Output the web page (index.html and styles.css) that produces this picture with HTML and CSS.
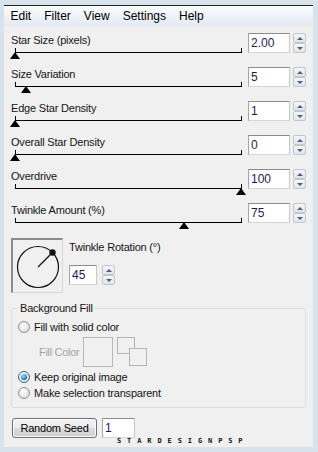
FILE: index.html
```html
<!DOCTYPE html>
<html lang="en">
<head>
    <meta charset="UTF-8">
    <title>Star Design</title>
    <link rel="stylesheet" href="styles.css">
</head>
<body>
<div class="window">
    <div class="inner">
        <div class="menubar">
            <span>Edit</span><span>Filter</span><span>View</span><span>Settings</span><span>Help</span>
        </div>
        <div class="panel">
            <div class="slider-row">
                <div class="slider-main">
                    <div class="label">Star Size (pixels)</div>
                    <div class="track"><div class="thumb" style="--v: 0"></div></div>
                </div>
                <input class="num" type="text" value="2.00">
                <div class="spin"><span class="up"></span><span class="down"></span></div>
            </div>
            <div class="slider-row">
                <div class="slider-main">
                    <div class="label">Size Variation</div>
                    <div class="track"><div class="thumb" style="--v: 0.05"></div></div>
                </div>
                <input class="num" type="text" value="5">
                <div class="spin"><span class="up"></span><span class="down"></span></div>
            </div>
            <div class="slider-row">
                <div class="slider-main">
                    <div class="label">Edge Star Density</div>
                    <div class="track"><div class="thumb" style="--v: 0"></div></div>
                </div>
                <input class="num" type="text" value="1">
                <div class="spin"><span class="up"></span><span class="down"></span></div>
            </div>
            <div class="slider-row">
                <div class="slider-main">
                    <div class="label">Overall Star Density</div>
                    <div class="track"><div class="thumb" style="--v: 0"></div></div>
                </div>
                <input class="num" type="text" value="0">
                <div class="spin"><span class="up"></span><span class="down"></span></div>
            </div>
            <div class="slider-row">
                <div class="slider-main">
                    <div class="label">Overdrive</div>
                    <div class="track"><div class="thumb" style="--v: 1"></div></div>
                </div>
                <input class="num" type="text" value="100">
                <div class="spin"><span class="up"></span><span class="down"></span></div>
            </div>
            <div class="slider-row">
                <div class="slider-main">
                    <div class="label">Twinkle Amount (%)</div>
                    <div class="track"><div class="thumb" style="--v: 0.75"></div></div>
                </div>
                <input class="num" type="text" value="75">
                <div class="spin"><span class="up"></span><span class="down"></span></div>
            </div>

            <div class="rotation">
                <div class="dial">
                    <svg width="49" height="52" viewBox="0 0 49 52">
                        <circle cx="25" cy="27" r="20.5" fill="none" stroke="#111" stroke-width="1.2"/>
                        <line x1="25" y1="27" x2="38" y2="14" stroke="#111" stroke-width="1.2"/>
                        <circle cx="39.5" cy="12.5" r="3.2" fill="#111"/>
                    </svg>
                </div>
                <div class="rot-controls">
                    <div class="label">Twinkle Rotation (&deg;)</div>
                    <div class="rot-input">
                        <input class="num small" type="text" value="45">
                        <div class="spin"><span class="up"></span><span class="down"></span></div>
                    </div>
                </div>
            </div>

            <fieldset class="group">
                <legend>Background Fill</legend>
                <div class="radio-row"><span class="radio"></span>Fill with solid color</div>
                <div class="fill-row">
                    <span class="fill-label">Fill Color</span>
                    <span class="color-box"></span>
                    <span class="swap"><span></span><span></span></span>
                </div>
                <div class="radio-row gap"><span class="radio checked"></span>Keep original image</div>
                <div class="radio-row"><span class="radio"></span>Make selection transparent</div>
            </fieldset>

            <div class="seed-row">
                <button class="btn">Random Seed</button>
                <input class="num seed" type="text" value="1">
                <div class="watermark">STARDESIGNPSP</div>
            </div>
        </div>
    </div>
</div>
</body>
</html>
```

FILE: styles.css
```css
* { box-sizing: border-box; }
body { margin: 0; font-family: "Liberation Sans", Arial, sans-serif; font-size: 11px; color: #151515; }
.window { width: 318px; height: 452px; background: #d8e2eb; padding: 5px 5px 5px 4px; }
.inner { height: 442px; border-top: 1px solid #222; background: #f0f0f0; overflow: hidden; }

.menubar { display: flex; height: 20px; line-height: 20px; font-size: 12px; color: #000; background: linear-gradient(#fbfcfe, #e3e9f4); }
.menubar span { padding: 0 6.5px; }

.panel { padding: 5px 7px 0; }
.label { line-height: 14px; padding-top: 2px; letter-spacing: -0.2px; }

.slider-row { display: flex; height: 34px; }
.slider-main { width: 237px; }
.track { position: relative; width: 227px; height: 5px; margin: 1px 0 0 4px; border: 1px solid #000; border-top: 0; }
.thumb { position: absolute; top: 100%; left: calc(var(--v) * 226px - 6.5px); width: 0; height: 0; border-left: 5.5px solid transparent; border-right: 5.5px solid transparent; border-bottom: 7px solid #000; }

.num { width: 42px; height: 20px; margin: 2px 0 0; padding: 0 2px; border: 1px solid; border-color: #8b8b8b #c8c8c8 #d6d6d6 #a6a6a6; background: #fff; font-family: "Liberation Sans", Arial, sans-serif; font-size: 12px; color: #221a55; outline: none; }
.spin { display: flex; flex-direction: column; width: 13px; height: 20px; margin: 2px 0 0 3px; }
.spin span { flex: 1; display: flex; align-items: center; justify-content: center; border: 1px solid #c3c7cc; border-radius: 2px; background: linear-gradient(#f6f6f6, #e2e4e7); }
.spin .up::after { content: ""; border-left: 3px solid transparent; border-right: 3px solid transparent; border-bottom: 3px solid #4c5f88; }
.spin .down::after { content: ""; border-left: 3px solid transparent; border-right: 3px solid transparent; border-top: 3px solid #4c5f88; }

.rotation { display: flex; padding-top: 3px; }
.dial { width: 52px; height: 55px; border-style: solid; border-width: 2px 1px 1px 2px; border-color: #8c8c8c #d8d8d8 #d8d8d8 #8c8c8c; }
.dial svg { display: block; }
.rot-controls { margin-left: 6px; }
.rot-controls .label { padding-top: 2px; }
.rot-input { display: flex; margin-top: 11px; }
.num.small { width: 28px; margin-top: 0; }
.rot-input .spin { margin: 0 0 0 5px; }

.group { margin: 8px 0 0; padding: 0 0 6px 6px; border: 1px solid #d5dfe5; border-radius: 3px; min-width: 0; }
.group legend { padding: 0 2px; line-height: 14px; letter-spacing: -0.2px; }
.radio-row { display: flex; align-items: center; height: 16px; letter-spacing: -0.2px; }
.radio-row:first-of-type { margin-top: 4px; }
.radio-row.gap { margin-top: 2px; }
.radio { display: flex; align-items: center; justify-content: center; width: 12px; height: 12px; margin-right: 4px; border: 1px solid #8e8e8e; border-radius: 50%; background: radial-gradient(circle at 40% 35%, #fff, #d4d4d4); }
.radio.checked { border-color: #3d5f86; }
.radio.checked::after { content: ""; width: 6px; height: 6px; border-radius: 50%; background: radial-gradient(circle at 40% 35%, #a4e3ff, #2a86d0 55%, #0b3c78); }

.fill-row { display: flex; margin-top: 2px; padding-left: 21px; }
.fill-label { width: 44px; align-self: center; color: #a3a3a3; letter-spacing: -0.3px; }
.color-box { width: 30px; height: 30px; border: 1px solid #b8b8b8; }
.swap { display: grid; margin-left: 4px; }
.swap span { grid-area: 1 / 1; width: 18px; height: 17px; border: 1px solid #b4b4b4; background: #f0f0f0; }
.swap span + span { height: 18px; margin: 11px 0 0 12px; }

.seed-row { position: relative; display: flex; margin-top: 10px; }
.btn { width: 85px; height: 20px; margin-left: 1px; padding: 0; border: 1px solid #707070; border-radius: 3px; background: linear-gradient(#f2f2f2 0%, #ebebeb 50%, #dddddd 50%, #cfcfcf 100%); box-shadow: inset 0 0 0 1px #fbfbfb; font-family: "Liberation Sans", Arial, sans-serif; font-size: 11px; color: #000; letter-spacing: -0.2px; }
.num.seed { width: 33px; margin: 0 0 0 5px; }
.watermark { position: absolute; left: 106px; top: 20px; font-family: "DejaVu Sans Mono", monospace; font-size: 7px; font-weight: bold; letter-spacing: 5.9px; line-height: 7px; color: #111; }
```
